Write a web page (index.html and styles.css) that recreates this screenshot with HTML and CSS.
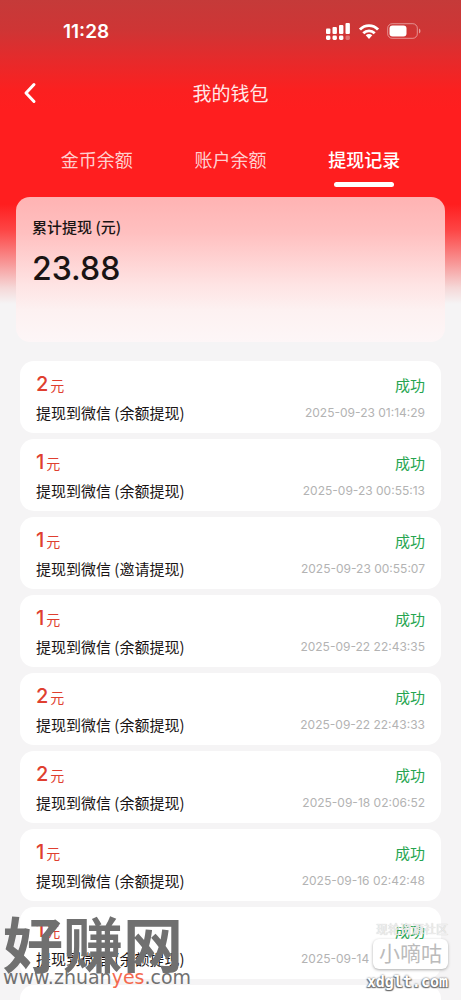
FILE: index.html
```html
<!DOCTYPE html>
<html lang="zh-CN">
<head>
<meta charset="utf-8">
<meta name="viewport" content="width=device-width, initial-scale=1">
<title>我的钱包</title>
<link rel="stylesheet" href="styles.css">
</head>
<body>
<div class="screen">
  <div class="status-bar">
    <span class="clock">11:28</span>
    <div class="status-icons">
      <svg class="icon-signal" viewBox="0 0 25 17" aria-hidden="true">
        <g fill="#fff">
          <rect x="0" y="5.500" width="4.400" height="5.500" rx="1"/><rect x="6.500" y="4" width="4.400" height="7" rx="1"/><rect x="13" y="2" width="4.400" height="9" rx="1"/><rect x="19.500" y="0" width="4.400" height="11" rx="1"/>
          <rect x="0" y="12.500" width="4.400" height="4.400" rx="1.400"/><rect x="6.500" y="12.500" width="4.400" height="4.400" rx="1.400"/><rect x="13" y="12.500" width="4.400" height="4.400" rx="1.400"/><rect x="19.500" y="12.500" width="4.400" height="4.400" rx="1.400" opacity=".3"/>
        </g>
      </svg>
      <svg class="icon-wifi" viewBox="0 0 20 15" aria-hidden="true">
        <g fill="none" stroke="#fff" stroke-width="2.8">
          <path d="M1 5.600C6 .4 14 .4 19 5.600"/><path d="M4.300 9.200c3.200-3.200 8.200-3.200 11.400 0"/>
        </g>
        <path d="M6.700 11.300c1.900-1.700 4.700-1.700 6.600 0L10 14.900z" fill="#fff"/>
      </svg>
      <svg class="icon-battery" viewBox="0 0 34 16" aria-hidden="true">
        <rect x=".7" y=".7" width="29.600" height="14.600" rx="4.500" fill="none" stroke="#fff" stroke-opacity=".45"/>
        <rect x="2.500" y="2.500" width="17" height="11" rx="3" fill="#fff"/>
        <path d="M32 5.500v5q1.500-.7 1.500-2.500T32 5.500z" fill="#fff" opacity=".5"/>
      </svg>
    </div>
  </div>

  <header class="nav">
    <button class="back" type="button" aria-label="返回">
      <svg viewBox="0 0 14 22" aria-hidden="true"><path d="M11 2.500L3 11l8 8.500" fill="none" stroke="#fff" stroke-width="3" stroke-linecap="round" stroke-linejoin="round"/></svg>
    </button>
    <h1 class="title">我的钱包</h1>
  </header>

  <nav class="tabs">
    <button class="tab" type="button">金币余额</button>
    <button class="tab" type="button">账户余额</button>
    <button class="tab tab-active" type="button">提现记录</button>
  </nav>

  <section class="summary">
    <h2 class="summary-label">累计提现 (元)</h2>
    <p class="summary-value">23.88</p>
  </section>

  <ul class="records">
    <li class="record"><div class="line"><span class="amount">2<small>元</small></span><span class="state">成功</span></div><div class="line"><span class="desc">提现到微信 (余额提现)</span><time class="time">2025-09-23 01:14:29</time></div></li>
    <li class="record"><div class="line"><span class="amount">1<small>元</small></span><span class="state">成功</span></div><div class="line"><span class="desc">提现到微信 (余额提现)</span><time class="time">2025-09-23 00:55:13</time></div></li>
    <li class="record"><div class="line"><span class="amount">1<small>元</small></span><span class="state">成功</span></div><div class="line"><span class="desc">提现到微信 (邀请提现)</span><time class="time">2025-09-23 00:55:07</time></div></li>
    <li class="record"><div class="line"><span class="amount">1<small>元</small></span><span class="state">成功</span></div><div class="line"><span class="desc">提现到微信 (余额提现)</span><time class="time">2025-09-22 22:43:35</time></div></li>
    <li class="record"><div class="line"><span class="amount">2<small>元</small></span><span class="state">成功</span></div><div class="line"><span class="desc">提现到微信 (余额提现)</span><time class="time">2025-09-22 22:43:33</time></div></li>
    <li class="record"><div class="line"><span class="amount">2<small>元</small></span><span class="state">成功</span></div><div class="line"><span class="desc">提现到微信 (余额提现)</span><time class="time">2025-09-18 02:06:52</time></div></li>
    <li class="record"><div class="line"><span class="amount">1<small>元</small></span><span class="state">成功</span></div><div class="line"><span class="desc">提现到微信 (余额提现)</span><time class="time">2025-09-16 02:42:48</time></div></li>
    <li class="record"><div class="line"><span class="amount">1<small>元</small></span><span class="state">成功</span></div><div class="line"><span class="desc">提现到微信 (余额提现)</span><time class="time time-date">2025-09-14</time></div></li>
    <li class="record"></li>
  </ul>

  <div class="mark mark-left">
    <div class="mark-name">好赚网</div>
    <div class="mark-url">www.zhuan<b>yes</b>.com</div>
  </div>
  <div class="mark mark-right">
    <div class="mark-caption">现轮资源社区</div>
    <div class="mark-badge">小嘀咕</div>
    <div class="mark-site">xdglt.com</div>
  </div>
</div>
</body>
</html>
```
FILE: styles.css
```css
* { box-sizing: border-box; }
body {
  margin: 0;
  background: #f5f4f5;
  font-family: Inter, "Noto Sans CJK SC", sans-serif;
  color: #1a1414;
}
button { border: 0; padding: 0; background: none; font: inherit; color: inherit; }
h1, h2, p, ul { margin: 0; padding: 0; font-weight: 400; }
ul { list-style: none; }

.screen {
  position: relative;
  height: 100vh;
  overflow: hidden;
  background: linear-gradient(#c53a39 0, #ce3535 30px, #e62a2b 60px, #fb2020 90px, #ff1e1f 110px, #ff1e1f 204px, #fd4545 230px, #f88f8f 260px, #f5d8d8 288px, #f5f4f5 304px);
}

.status-bar {
  display: flex;
  justify-content: space-between;
  align-items: center;
  height: 62px;
  padding: 0 40px 0 63px;
  color: #fff;
}
.clock { font-size: 19px; font-weight: 600; }
.status-icons { display: flex; align-items: center; gap: 8px; }
.icon-signal { width: 25px; height: 17px; }
.icon-wifi { width: 20px; height: 15px; }
.icon-battery { width: 34px; height: 16px; }

.nav {
  display: grid;
  grid-template-columns: 60px 1fr 60px;
  align-items: center;
  height: 62px;
  color: #ffe8e8;
}
.back { display: flex; padding-left: 23px; }
.back svg { width: 14px; height: 22px; }
.title { padding-bottom: 2px; text-align: center; font-size: 19px; }

.tabs {
  display: grid;
  grid-template-columns: repeat(3, 1fr);
  height: 73px;
  padding: 0 30px;
  color: #ffcfcf;
  font-size: 18px;
}
.tab {
  display: flex;
  flex-direction: column;
  align-items: center;
  padding-top: 23px;
  line-height: 28px;
}
.tab-active { color: #fff; font-weight: 500; }
.tab-active::after {
  content: "";
  width: 60px;
  height: 5px;
  margin-top: 7px;
  border-radius: 3px;
  background: #fff;
}

.summary {
  height: 145px;
  margin: 0 16px;
  padding: 19px 16px;
  border-radius: 14px;
  background: linear-gradient(#ffb3b3, #ffc0c0 25%, #fee3e3 60%, #fdf1f1 78%, #fdf6f7);
}
.summary-label {
  font-family: "Noto Sans CJK SC", sans-serif;
  font-size: 15px;
  line-height: 22px;
  font-weight: 500;
}
.summary-value { margin-top: 11px; font-size: 32px; line-height: 40px; font-weight: 500; }

.records {
  display: grid;
  gap: 6px;
  padding: 19px 20px 0;
}
.record {
  height: 72px;
  padding: 10px 16px;
  border-radius: 14px;
  background: #fff;
}
.line {
  display: flex;
  justify-content: space-between;
  align-items: center;
  height: 26px;
}
.line + .line { margin-top: 2px; }
.amount { color: #df3f30; font-size: 20px; font-weight: 500; }
.amount small { margin-left: 2px; font-size: 14px; font-weight: 400; }
.state { color: #26a550; font-size: 15px; }
.desc { font-family: "Noto Sans CJK SC", sans-serif; font-size: 15px; }
.time { color: #b3b3b3; font-size: 12px; }
.time-date { width: 124px; }

.mark { position: absolute; }
.mark-left { left: 3px; bottom: 13px; }
.mark-name {
  color: #707070;
  font-family: "Noto Sans CJK SC", sans-serif;
  font-size: 60px;
  line-height: 50px;
  font-weight: 700;
}
.mark-url {
  color: #707070;
  font-family: "DejaVu Sans", sans-serif;
  font-size: 19px;
  line-height: 20px;
}
.mark-url b { color: #f4694f; font-weight: 400; }
.mark-right {
  right: 13px;
  bottom: 9px;
  display: flex;
  flex-direction: column;
  align-items: flex-end;
}
.mark-caption {
  color: #eee;
  font-size: 12px;
  line-height: 18px;
  text-shadow: 0 0 1px #bbb;
}
.mark-badge {
  padding: 0 6px;
  border-radius: 6px;
  background: #fff;
  box-shadow: 0 1px 3px #aaa;
  color: #bbb;
  font-size: 21px;
  line-height: 30px;
}
.mark-site {
  margin-top: 4px;
  color: #fff;
  font-family: "DejaVu Sans Mono", monospace;
  font-size: 15px;
  line-height: 18px;
  font-weight: 700;
  text-shadow: 0 0 2px #555, 1px 1px 1px #777, -1px 1px 1px #777;
}
```
